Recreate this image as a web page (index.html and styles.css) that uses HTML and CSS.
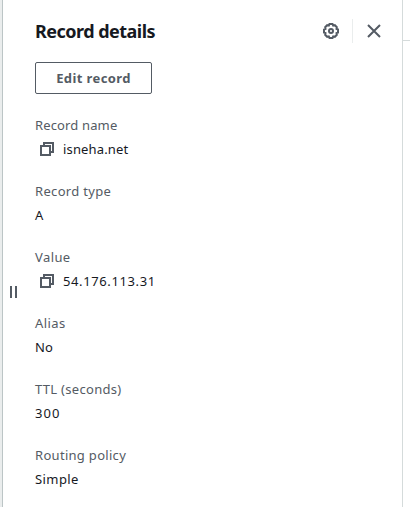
FILE: index.html
```html
<!DOCTYPE html>
<html lang="en">
<head>
<meta charset="utf-8">
<title>Record details</title>
<link rel="stylesheet" href="styles.css">
</head>
<body>
<div class="app">
  <aside class="panel">
    <div class="resize"><i></i><i></i></div>
    <div class="content">
      <header class="header">
        <h2><span>Record details</span></h2>
        <div class="tools">
          <svg class="gear" width="16" height="16" viewBox="0 0 16 16"><path d="M6.500 1h3l.7 1.500 1.600-.3 2 2-.3 1.600L15 6.500v3l-1.500.7.3 1.600-2 2-1.600-.3L9.500 15h-3l-.7-1.500-1.600.3-2-2 .3-1.600L1 9.500v-3l1.500-.7-.3-1.600 2-2 1.600.3Z"/><circle cx="8" cy="8" r="2"/></svg>
          <span class="divider"></span>
          <svg class="close" width="16" height="16" viewBox="0 0 16 16"><path d="M2 2l12 12M14 2L2 14"/></svg>
        </div>
      </header>
      <button class="edit"><span>Edit record</span></button>
      <dl>
        <div class="field"><dt class="name">Record name</dt><dd class="host"><svg class="copy" width="16" height="16" viewBox="0 0 16 16"><path d="M2 5h9v9H2zM5 5V2h9v9h-3"/></svg><span>isneha.net</span></dd></div>
        <div class="field"><dt class="type">Record type</dt><dd>A</dd></div>
        <div class="field"><dt class="value">Value</dt><dd class="address"><svg class="copy" width="16" height="16" viewBox="0 0 16 16"><path d="M2 5h9v9H2zM5 5V2h9v9h-3"/></svg><span>54.176.113.31</span></dd></div>
        <div class="field"><dt class="alias">Alias</dt><dd class="no">No</dd></div>
        <div class="field"><dt class="ttl">TTL (seconds)</dt><dd class="seconds">300</dd></div>
        <div class="field"><dt class="routing">Routing policy</dt><dd class="simple">Simple</dd></div>
      </dl>
    </div>
  </aside>
  <div class="rail"></div>
</div>
</body>
</html>
```
FILE: styles.css
```css
* { box-sizing: border-box; }
body { margin: 0; background: #fff; color: #16191f; font: 13px/22px "Noto Sans", sans-serif; }
.app { display: flex; height: 507px; overflow: hidden; background: #fff; }
.panel { display: flex; width: 403px; border-left: 2px solid #eaeded; border-right: 1px solid #d5dbdb; }
.resize { display: flex; gap: 3px; width: 33px; padding: 286px 0 0 7px; border-left: 1px solid #bcc5c6; }
.resize i { width: 2px; height: 12px; background: #545b64; }
.content { flex: 1; padding-top: 16px; }
.header { display: flex; justify-content: space-between; height: 30px; padding-right: 20px; }
h2 { margin: 0; font-size: 18px; line-height: 30px; font-weight: 700; letter-spacing: -.52px; }
.tools { display: flex; align-items: center; }
svg { display: block; fill: none; stroke: #545b64; stroke-width: 2; }
.divider { width: 1px; height: 24px; margin: 0 13px; background: #eaeded; }
.edit { display: flex; align-items: center; justify-content: center; width: 117px; height: 32px; margin: 16px 0 0; padding: 0; border: 1px solid #545b64; border-radius: 2px; background: #fff; color: #545b64; font: 700 13px/22px "Noto Sans", sans-serif; letter-spacing: .4px; }
dl { margin: 20px 0 0; }
.field { height: 66px; }
dt { color: #545b64; line-height: 22px; }
dd { display: flex; align-items: center; height: 22px; margin: 2px 0 0; }
.copy { margin: 0 8px 0 4px; }
.name { letter-spacing: .14px; }
.type { letter-spacing: .33px; }
.value, .alias { letter-spacing: .4px; }
.host { letter-spacing: .15px; }
.address { letter-spacing: .61px; }
.ttl, .routing { letter-spacing: .3px; }
.seconds { letter-spacing: 1.1px; }
.simple { letter-spacing: .42px; }
.rail { flex: 1; height: 41px; border-bottom: 1px solid #d5dbdb; }
```
